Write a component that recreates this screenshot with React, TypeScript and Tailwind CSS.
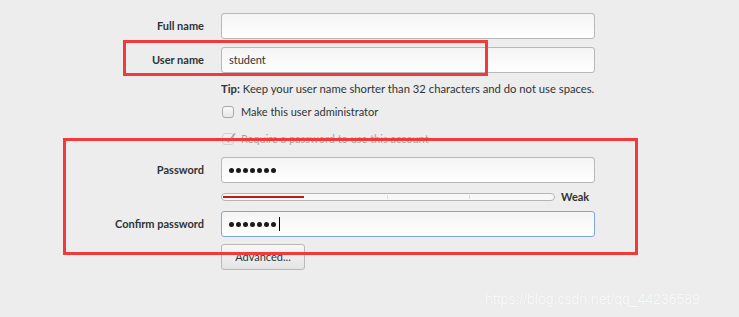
import React from "react";

const font = { fontFamily: 'Lato, "DejaVu Sans", sans-serif' };

function Dots({ cursor }: { cursor?: boolean }) {
  return (
    <div className="flex items-center gap-[2px]">
      {Array.from({ length: 7 }).map((_, i) => (
        <span key={i} className="block w-[5px] h-[5px] rounded-full bg-[#1a1a1a]" />
      ))}
      {cursor && <span className="block w-[1px] h-[14px] bg-black ml-[1px]" />}
    </div>
  );
}

function Field({
  label,
  children,
  focused,
}: {
  label: string;
  children?: React.ReactNode;
  focused?: boolean;
}) {
  return (
    <div className="flex items-center">
      <div className="w-[204px] text-right text-[11px] font-bold text-[#2e3436]">{label}</div>
      <div
        className={`ml-[17px] w-[374px] h-[26px] rounded-[3px] border bg-gradient-to-b from-[#f4f4f4] to-[#ffffff] flex items-center pl-[7px] text-[11px] text-[#2e3436] ${
          focused ? "border-[#7fa9de]" : "border-[#b8b8b6]"
        }`}
      >
        {children}
      </div>
    </div>
  );
}

function Check({ checked, disabled, label }: { checked?: boolean; disabled?: boolean; label: string }) {
  return (
    <div className={`flex items-center ml-[222px] h-[16px] ${disabled ? "opacity-40" : ""}`}>
      <div className="relative w-[12px] h-[12px] rounded-[3px] border border-[#a8a8a6] bg-gradient-to-b from-[#fafafa] to-[#e6e6e6]">
        {checked && (
          <svg className="absolute left-[0px] top-[-3px]" width="14" height="14" viewBox="0 0 14 14">
            <path d="M2.5 7.5 L5.5 10.5 L12 2.5" fill="none" stroke="#3a3a3a" strokeWidth="1.6" />
          </svg>
        )}
      </div>
      <span className="ml-[7px] text-[11px] text-[#2e3436]">{label}</span>
    </div>
  );
}

export default function App() {
  return (
    <div className="relative w-[739px] h-[317px] bg-[#ededed] overflow-hidden" style={font}>
      <div className="flex flex-col pt-[13px]">
        <Field label="Full name" />
        <div className="mt-[8px]">
          <Field label="User name">student</Field>
        </div>
        <div className="mt-[9px] ml-[221px] h-[14px] flex items-center text-[11.25px] text-[#2e3436]">
          <span className="font-bold">Tip:</span>
          <span className="ml-[3px]">Keep your user name shorter than 32 characters and do not use spaces.</span>
        </div>
        <div className="mt-[8px]">
          <Check label="Make this user administrator" />
        </div>
        <div className="mt-[11px]">
          <Check checked disabled label="Require a password to use this account" />
        </div>
        <div className="mt-[10px]">
          <Field label="Password">
            <Dots />
          </Field>
        </div>
        <div className="mt-[7px] h-[14px] flex items-center ml-[221px]">
          <div className="relative w-[334px] h-[8px] rounded-[4px] border border-[#b5b5b3] bg-[#f8f8f8] flex">
            <div className="absolute left-[1px] top-[2px] w-[81px] h-[2px] bg-[#c01c1c]" />
            <div className="absolute left-[165px] top-[1px] w-[1px] h-[4px] bg-[#dcdcdc]" />
            <div className="absolute left-[247px] top-[1px] w-[1px] h-[4px] bg-[#dcdcdc]" />
          </div>
          <span className="ml-[6px] text-[11px] font-bold text-[#2e3436]">Weak</span>
        </div>
        <div className="mt-[7px]">
          <Field label="Confirm password" focused>
            <Dots cursor />
          </Field>
        </div>
        <div className="mt-[7px] ml-[221px] w-[84px] h-[26px] rounded-[3px] border border-[#b8b8b6] bg-gradient-to-b from-[#f8f8f8] to-[#e4e4e4] flex items-center justify-center text-[11px] text-[#2e3436]">
          Advanced...
        </div>
      </div>

      {/* annotation boxes */}
      <div className="absolute left-[123px] top-[40px] w-[365px] h-[36px] border-[3px] border-[#f33a3a]" />
      <div className="absolute left-[63px] top-[138px] w-[575px] h-[117px] border-[3px] border-[#f33a3a]" />

      {/* watermark */}
      <div
        className="absolute left-[485px] top-[289px] text-[14px] text-[#f9f9f9] [text-shadow:0_0_1px_#dcdcdc]"
        style={{ fontFamily: '"Liberation Sans", Arial, sans-serif' }}
      >
        https://blog.csdn.net/qq_44236589
      </div>
    </div>
  );
}
